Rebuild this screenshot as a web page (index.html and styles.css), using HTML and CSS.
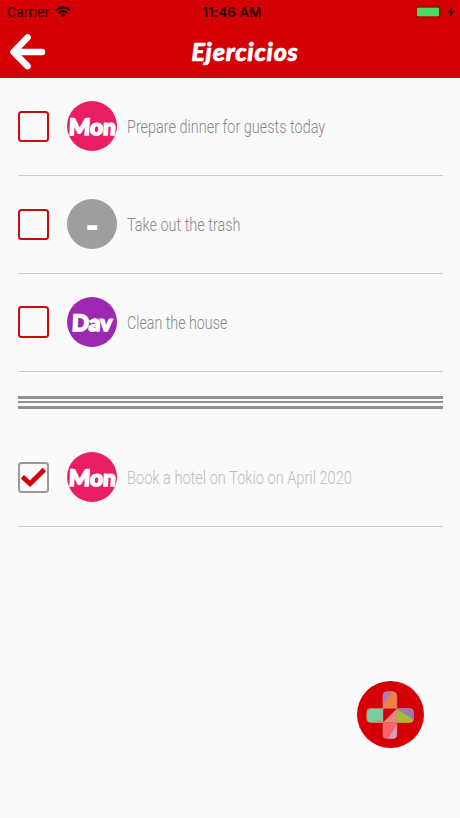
FILE: index.html
```
<!DOCTYPE html>
<html lang="es">
<head>
<meta charset="utf-8">
<title>Ejercicios</title>
<link rel="stylesheet" href="styles.css">
</head>
<body>
<header class="header">
  <div class="status">
    <div class="status-left"><span class="carrier">Carrier</span>
      <svg class="wifi" viewBox="0 0 16 12"><path d="M1 4.4Q8-1.6 15 4.4M3.5 7Q8 3.2 12.5 7" fill="none" stroke="currentColor" stroke-width="2.1"/><path d="M5.5 8.8Q8 6.8 10.5 8.8L8 11.3Z" fill="currentColor"/></svg>
    </div>
    <span class="time">11:46 AM</span>
    <div class="status-right">
      <svg class="battery" viewBox="0 0 28 12"><rect x=".6" y=".6" width="24.8" height="10.8" rx="2.6" fill="none" stroke="#8e1208" stroke-width="1"/><rect x="2" y="1.7" width="22" height="8.6" rx="1" fill="#4cd964"/><path d="M26.6 4v4q1.2-.5 1.2-2t-1.2-2" fill="#8e1208"/></svg>
      <svg class="bolt" viewBox="0 0 6 10"><path d="M4 0 0 5.7h2.5L1.8 10 6 4.2H3.4z" fill="currentColor"/></svg>
    </div>
  </div>
  <div class="nav">
    <svg class="back" viewBox="0 0 36 36"><path d="M18.5 4.2 5.2 18l13.3 13.4M5.6 18h26.6" fill="none" stroke="#fff" stroke-width="6.2" stroke-linecap="round" stroke-linejoin="round"/></svg>
    <h1 class="title"><span class="title-text">Ejercicios</span></h1>
  </div>
</header>
<main class="list">
  <div class="row"><span class="box"></span><span class="avatar pink"><b>Mon</b></span><span class="label">Prepare dinner for guests today</span></div>
  <div class="row"><span class="box"></span><span class="avatar gray"><b class="dash">-</b></span><span class="label">Take out the trash</span></div>
  <div class="row"><span class="box"></span><span class="avatar purple"><b>Dav</b></span><span class="label clean">Clean the house</span></div>
  <div class="stripes"><i></i><i class="thin"></i><i></i></div>
  <div class="row done"><span class="box"><svg class="check" viewBox="0 0 26 22"><path d="M2.3 10.2 9.7 17 23.5 3.3" fill="none" stroke="#d20007" stroke-width="4.6"/></svg></span><span class="avatar pink"><b>Mon</b></span><span class="label hotel">Book a hotel on Tokio on April 2020</span></div>
</main>
<button class="fab" aria-label="Add">
  <svg class="plus" viewBox="0 0 48 48">
    <defs><clipPath id="cross"><rect x="17" y="0.8" width="13.8" height="46.8" rx="4"/><rect x=".8" y="17.6" width="46.8" height="13.8" rx="4"/></clipPath></defs>
    <g clip-path="url(#cross)">
      <path d="M17 0h14v17.6H17z" fill="#f18142"/><path d="M17 0h9L17 15z" fill="#ac7ac0"/>
      <path d="M0 17h17v15H0z" fill="#7bcba2"/><path d="M17 28.5v3H3z" fill="#b4a283"/><path d="M0 17h5L1 24z" fill="#b4a283"/>
      <path d="M31 17h17v15H31z" fill="#967bc1"/><path d="M31 18l17 11v3H31z" fill="#a5bd2d"/>
      <path d="M17 17.6h14v13.8H17z" fill="#cf0010"/><path d="M31 17.6v13.8H17z" fill="#e78b78"/>
      <path d="M17 31.4h14V48H17z" fill="#fa6264"/><path d="M31 33V48h-9z" fill="#cf9fc8"/>
      <path d="M17 17.6h14v13.8H17z" fill="none" stroke="#c08a70" stroke-width=".5"/>
    </g>
    <path d="M17 17.6V4.8q0-4 4-4h5.8q4 0 4 4v12.8h12.8q4 0 4 4v5.8q0 4-4 4H30.8v12.2q0 4-4 4H21q-4 0-4-4V31.4H4.8q-4 0-4-4v-5.8q0-4 4-4z" fill="none" stroke="#c99775" stroke-width=".6"/>
  </svg>
</button>
</body>
</html>
```
FILE: styles.css
```
* { box-sizing: border-box; }
body { margin: 0; width: 460px; height: 818px; overflow: hidden; background: #fafafa; font-family: Roboto, sans-serif; }
.header { height: 78px; background: #d40006; }
.status { height: 24px; padding: 0 6px 0 7px; display: grid; grid-template-columns: 1fr auto 1fr; align-items: center; color: #250000; font: 13px/24px Inter, sans-serif; }
.status-left, .status-right { display: flex; align-items: center; }
.status-left { gap: 6px; }
.status-right { justify-content: flex-end; gap: 5px; }
.carrier { letter-spacing: -.05px; }
.time { font-weight: 600; letter-spacing: .3px; margin-left: 3px; }
.wifi { width: 16px; height: 12px; }
.battery { width: 28px; height: 12px; }
.bolt { width: 6px; height: 10px; }
.nav { height: 54px; padding: 0 8px; display: grid; grid-template-columns: 40px 1fr 10px; align-items: center; }
.back { width: 38px; height: 38px; margin-top: 2px; }
.title { margin: 0; text-align: center; color: #fff; font: italic 900 25px/50px Lato, sans-serif; }
.title-text { display: inline-block; letter-spacing: .8px; -webkit-text-stroke: .7px #fff; }
.list { padding: 0 17.5px; }
.row { height: 97.9px; display: flex; align-items: center; border-bottom: 1px solid #cbcbcb; }
.box { flex: none; width: 31.5px; height: 31.5px; border: 2px solid #cb0b10; border-radius: 3.5px; display: grid; place-items: center; }
.avatar { flex: none; width: 50px; height: 50px; margin: 0 10px 0 18px; border-radius: 50%; display: flex; align-items: center; justify-content: center; color: #fff; font: 22.5px/50px Lato, sans-serif; }
.avatar b { font-weight: 900; -webkit-text-stroke: 1.6px #fff; transform: translateY(1px) skewX(-3deg); }
.avatar .dash { transform: translateY(2px) scale(1.3, 1.1); }
.pink { background: #e91e63; }
.gray { background: #9e9e9e; }
.purple { background: #9c27b0; }
.label { font-size: 19px; font-weight: 300; color: #888; white-space: nowrap; transform: scaleX(.76); transform-origin: left; }
.label.clean { transform: scaleX(.75); }
.label.hotel { transform: scaleX(.768); }
.stripes { height: 57.3px; padding-top: 24px; display: flex; flex-direction: column; gap: 2.5px; }
.stripes i { height: 3px; background: #919191; }
.stripes .thin { height: 2px; }
.done .box { border-color: #999; }
.done .label { color: #bdbdbd; }
.check { width: 27px; height: 23px; }
.fab { position: absolute; left: 356.5px; top: 681px; width: 67px; height: 67px; padding: 0; border: 0; border-radius: 50%; background: #d40006; display: grid; place-items: center; }
.plus { width: 48px; height: 48px; }
```
